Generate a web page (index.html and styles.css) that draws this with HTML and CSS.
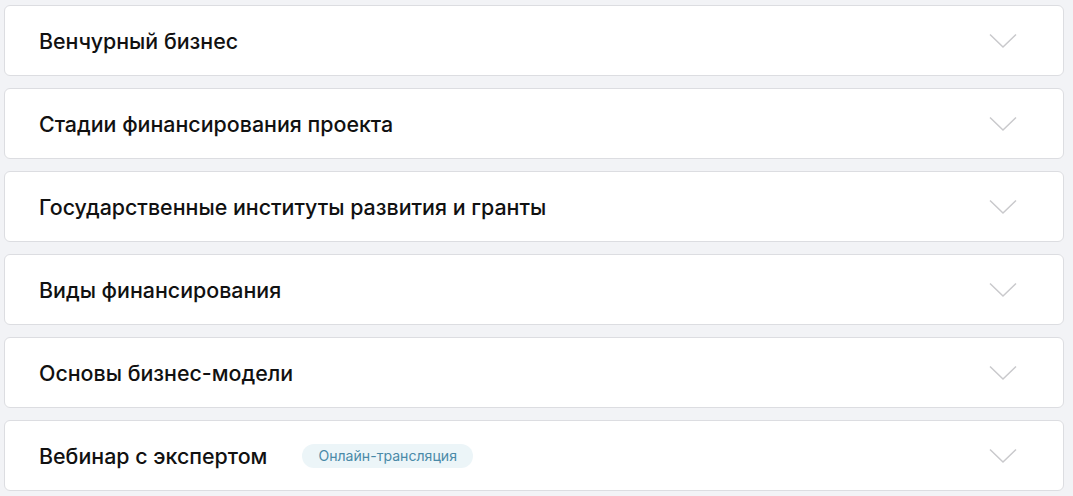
FILE: index.html
```html
<!DOCTYPE html>
<html lang="ru">
  <head>
    <meta charset="UTF-8" />
    <meta name="viewport" content="width=device-width, initial-scale=1.0" />
    <title>Программа курса</title>
    <link rel="stylesheet" href="styles.css">
  </head>
  <body>
    <div class="accordion">
      <div class="item">
        <span class="title">Венчурный бизнес</span>
        <svg class="chevron" viewBox="0 0 28 16"><path d="M1 1.5 L14 14 L27 1.5" /></svg>
      </div>
      <div class="item">
        <span class="title">Стадии финансирования проекта</span>
        <svg class="chevron" viewBox="0 0 28 16"><path d="M1 1.5 L14 14 L27 1.5" /></svg>
      </div>
      <div class="item">
        <span class="title">Государственные институты развития и гранты</span>
        <svg class="chevron" viewBox="0 0 28 16"><path d="M1 1.5 L14 14 L27 1.5" /></svg>
      </div>
      <div class="item">
        <span class="title">Виды финансирования</span>
        <svg class="chevron" viewBox="0 0 28 16"><path d="M1 1.5 L14 14 L27 1.5" /></svg>
      </div>
      <div class="item">
        <span class="title">Основы бизнес-модели</span>
        <svg class="chevron" viewBox="0 0 28 16"><path d="M1 1.5 L14 14 L27 1.5" /></svg>
      </div>
      <div class="item">
        <span class="title">Вебинар с экспертом</span>
        <span class="badge">Онлайн-трансляция</span>
        <svg class="chevron" viewBox="0 0 28 16"><path d="M1 1.5 L14 14 L27 1.5" /></svg>
      </div>
    </div>
  </body>
</html>
```

FILE: styles.css
```css
body {
  margin: 0;
  background-color: #f2f3f6;
  font-family: Inter, "Noto Sans", sans-serif;
}

.accordion {
  display: flex;
  flex-direction: column;
  gap: 12px;
  padding: 5px 9px 6px 4px;
}

.item {
  display: flex;
  align-items: center;
  box-sizing: border-box;
  height: 71px;
  padding: 0 46px 0 34px;
  background-color: #fff;
  border: 1px solid #dcdde1;
  border-radius: 6px;
}

.title {
  font-size: 21.4px;
  font-weight: 500;
  color: #111;
}

.badge {
  margin-left: 35px;
  padding: 0 16px;
  height: 24px;
  line-height: 24px;
  border-radius: 12px;
  background-color: #ecf5f8;
  color: #4a8aa8;
  font-size: 14.1px;
}

.chevron {
  margin-left: auto;
  width: 28px;
  height: 16px;
  fill: none;
  stroke: #c9c9cc;
  stroke-width: 1.5;
}
```
